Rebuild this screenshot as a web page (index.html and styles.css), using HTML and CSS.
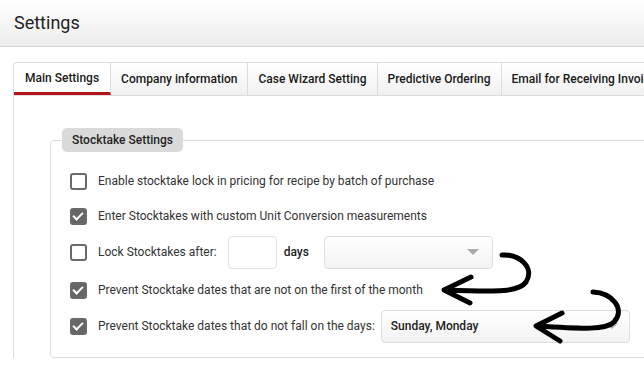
FILE: index.html
```html
<!DOCTYPE html>
<html>
    <head>
        <meta charset="UTF-8">
        <title>Settings</title>
        <link rel="stylesheet" href="styles.css">
    </head>
    <body>
        <div class="page-header">
            <h1>Settings</h1>
        </div>
        <div class="tabs">
            <ul class="tab-bar">
                <li class="tab active">Main Settings</li>
                <li class="tab">Company information</li>
                <li class="tab">Case Wizard Setting</li>
                <li class="tab">Predictive Ordering</li>
                <li class="tab">Email for Receiving Invoices</li>
            </ul>
            <div class="tab-panel">
                <fieldset class="group">
                    <legend>Stocktake Settings</legend>
                    <div class="row">
                        <span class="check"></span>
                        <label>Enable stocktake lock in pricing for recipe by batch of purchase</label>
                    </div>
                    <div class="row">
                        <span class="check checked"></span>
                        <label>Enter Stocktakes with custom Unit Conversion measurements</label>
                    </div>
                    <div class="row tall">
                        <span class="check"></span>
                        <label>Lock Stocktakes after:</label>
                        <input type="text" class="num-input">
                        <span class="unit">days</span>
                        <div class="select small"><span></span><i class="caret"></i></div>
                    </div>
                    <div class="row first-month">
                        <span class="check checked"></span>
                        <label>Prevent Stocktake dates that are not on the first of the month</label>
                    </div>
                    <div class="row tall">
                        <span class="check checked"></span>
                        <label>Prevent Stocktake dates that do not fall on the days:</label>
                        <div class="select wide"><span>Sunday, Monday</span><i class="caret"></i></div>
                    </div>
                </fieldset>
            </div>
        </div>

        <!-- hand drawn arrows on top of the screenshot -->
        <svg class="arrows" width="644" height="366" viewBox="0 0 644 366">
            <g fill="none" stroke="#000" stroke-width="5" stroke-linecap="round" stroke-linejoin="round">
                <path d="M502 255 C520 254 535 268 526 282 C519 292 500 292 445 290"/>
                <path d="M471 277 L444 290 L470 303"/>
                <path d="M593 292 C612 293 626 309 614 322 C606 330 585 329 537 326"/>
                <path d="M562 313 L536 326 L560 341"/>
            </g>
        </svg>
    </body>
</html>
```

FILE: styles.css
```css
html, body {
    margin: 0;
    overflow: hidden;
}
body {
    width: 644px;
    height: 366px;
    font-family: Roboto, "Liberation Sans", sans-serif;
    color: #333;
    background-color: white;
    position: relative;
}
.page-header {
    height: 47px;
    background: linear-gradient(#ffffff, #ededed);
    border-bottom: 1px solid #d6d6d6;
    box-sizing: border-box;
}
.page-header h1 {
    margin: 0;
    padding: 12px 0 0 14px;
    font-size: 18px;
    font-weight: 400;
    line-height: 22px;
    color: #222;
}
.tabs {
    margin: 15px 0 0 13px;
    width: 631px;
    overflow: hidden;
    border-left: 1px solid #dcdcdc;
    border-top: 1px solid #dcdcdc;
    border-radius: 4px 0 0 0;
}
.tab-bar {
    list-style: none;
    margin: 0;
    padding: 0;
    display: flex;
    border-bottom: 1px solid #dcdcdc;
    white-space: nowrap;
}
.tab {
    height: 32px;
    line-height: 32px;
    padding: 0 10px;
    font-size: 12px;
    font-weight: 500;
    color: #1a1a1a;
    background: linear-gradient(#ffffff, #f1f1f1);
    border-right: 1px solid #dcdcdc;
    box-sizing: border-box;
    flex-shrink: 0;
}
.tab.active {
    background: white;
    border-bottom: 3px solid #b5121b;
    line-height: 30px;
    padding: 0 11px;
}
.tab-panel {
    padding: 32px 0 0 36px;
    width: 760px;
}
.group {
    margin: 0;
    padding: 12px 0 12px 19px;
    border: 1px solid #dcdcdc;
    border-radius: 4px;
}
.group legend {
    margin-left: -8px;
    padding: 0 10px;
    height: 24px;
    line-height: 24px;
    background-color: #dadada;
    border-radius: 5px;
    font-size: 12px;
    font-weight: 500;
    color: #222;
}
.row {
    display: flex;
    align-items: center;
    height: 34px;
    margin-bottom: 1px;
    font-size: 12px;
}
.row.tall {
    height: 36px;
}
.row.first-month {
    margin-top: 3px;
}
.check {
    width: 17px;
    height: 17px;
    box-sizing: border-box;
    border: 2px solid #6a6a6a;
    border-radius: 3px;
    margin-right: 11px;
    position: relative;
    flex-shrink: 0;
}
.check.checked {
    background-color: #666;
}
.check.checked::after {
    content: "";
    position: absolute;
    left: 3px;
    top: 0px;
    width: 4px;
    height: 8px;
    border: solid white;
    border-width: 0 2px 2px 0;
    transform: rotate(45deg);
}
.num-input {
    width: 49px;
    height: 33px;
    box-sizing: border-box;
    margin-left: 11px;
    border: 1px solid #e2e2e2;
    border-radius: 4px;
}
.unit {
    margin-left: 7px;
    font-weight: 500;
    color: #222;
}
.select {
    height: 33px;
    box-sizing: border-box;
    border: 1px solid #dedede;
    border-radius: 4px;
    background: linear-gradient(#ffffff, #f3f3f3);
    display: flex;
    align-items: center;
    justify-content: space-between;
    padding: 0 9px;
    font-weight: 500;
    color: #222;
}
.select.small {
    width: 169px;
    margin-left: 15px;
    padding-right: 13px;
}
.select.wide {
    width: 249px;
    margin-left: 6px;
    padding-right: 11px;
}
.caret {
    width: 0;
    height: 0;
    border-left: 6px solid transparent;
    border-right: 6px solid transparent;
    border-top: 6px solid #aaa;
}
.arrows {
    position: absolute;
    left: 0;
    top: 0;
}
```
